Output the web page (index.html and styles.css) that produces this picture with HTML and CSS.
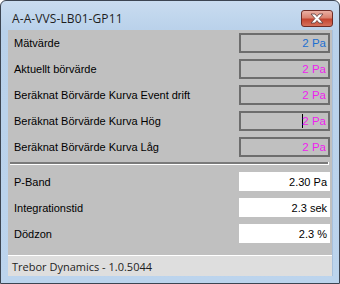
FILE: index.html
```html
<!DOCTYPE html>
<html lang="sv">
<head>
  <meta charset="UTF-8">
  <title>A-A-VVS-LB01-GP11</title>
  <link rel="stylesheet" href="styles.css">
</head>
<body>

  <div class="window">
    <div class="titlebar">
      <span class="title">A-A-VVS-LB01-GP11</span>
      <button class="close">
        <svg width="18" height="11" viewBox="0 0 18 11">
          <path d="M3 1 L7 1 L9 3.5 L11 1 L15 1 L11 5.5 L15 10 L11 10 L9 7.5 L7 10 L3 10 L7 5.5 Z"
                fill="#ffffff" stroke="#5a3a3a" stroke-width="0.8" stroke-linejoin="round"/>
        </svg>
      </button>
    </div>

    <div class="client">
      <div class="rows">
        <div class="row">
          <span class="label">Mätvärde</span>
          <span class="value blue">2 Pa</span>
        </div>
        <div class="row">
          <span class="label">Aktuellt börvärde</span>
          <span class="value pink">2 Pa</span>
        </div>
        <div class="row">
          <span class="label">Beräknat Börvärde Kurva Event drift</span>
          <span class="value pink">2 Pa</span>
        </div>
        <div class="row">
          <span class="label">Beräknat Börvärde Kurva Hög</span>
          <span class="value pink"><span class="caret"></span>2 Pa</span>
        </div>
        <div class="row">
          <span class="label">Beräknat Börvärde Kurva Låg</span>
          <span class="value pink">2 Pa</span>
        </div>
      </div>

      <div class="separator"></div>

      <div class="rows settings">
        <div class="row">
          <span class="label">P-Band</span>
          <span class="input">2.30 Pa</span>
        </div>
        <div class="row">
          <span class="label">Integrationstid</span>
          <span class="input">2.3 sek</span>
        </div>
        <div class="row">
          <span class="label">Dödzon</span>
          <span class="input">2.3 %</span>
        </div>
      </div>

      <div class="statusbar">Trebor Dynamics - 1.0.5044</div>
    </div>
  </div>

</body>
</html>
```

FILE: styles.css
```css
body {
  margin: 0;
  background-color: #ffffff;
}

.window {
  width: 340px;
  height: 284px;
  box-sizing: border-box;
  border: 1px solid #3c4552;
  border-radius: 6px 6px 0 0;
  background: linear-gradient(#c9dcf0, #b9d1ea 30px, #bcd4ed);
  padding: 0 6px 7px 7px;
  display: flex;
  flex-direction: column;
}

.titlebar {
  height: 29px;
  display: flex;
  align-items: flex-start;
  justify-content: space-between;
}

.title {
  font-family: 'Open Sans', sans-serif;
  font-size: 12px;
  color: #1e1e1e;
  margin: 9px 0 0 4px;
  letter-spacing: 0.1px;
}

.close {
  width: 32px;
  height: 17px;
  margin-top: 9px;
  padding: 0;
  border: 1px solid #6e2c26;
  border-radius: 3px;
  background: linear-gradient(#eab0a4, #d9826f 45%, #c4442f 55%, #d5715b);
  display: flex;
  align-items: center;
  justify-content: center;
}

.client {
  flex: 1;
  background-color: #c0c0c0;
  border-right: 1px solid #a7c0dc;
  display: flex;
  flex-direction: column;
  font-family: 'Liberation Sans', sans-serif;
  font-size: 11px;
  color: #000000;
}

.rows {
  display: flex;
  flex-direction: column;
  gap: 6px;
  padding: 3px 2px 0 5px;
}

.row {
  height: 20px;
  display: flex;
  align-items: center;
  justify-content: space-between;
}

.label {
  padding-left: 1px;
}

.value {
  width: 91px;
  height: 20px;
  box-sizing: border-box;
  border: 2px solid #6d6d6d;
  padding-right: 2px;
  display: flex;
  align-items: center;
  justify-content: flex-end;
  font-size: 11.5px;
}

.blue {
  color: #1d6fd0;
}

.pink {
  color: #ee22ee;
}

.caret {
  width: 1px;
  height: 14px;
  background-color: #000000;
  margin-right: -1px;
}

.separator {
  margin: 5px 3px 0 2px;
  height: 2px;
  background-color: #7a7a7a;
  border-bottom: 1px solid #ffffff;
  border-right: 1px solid #ffffff;
}

.settings {
  gap: 7px;
  padding-top: 7px;
}

.settings .row {
  height: 19px;
}

.input {
  width: 91px;
  height: 19px;
  box-sizing: border-box;
  background-color: #ffffff;
  padding-right: 3px;
  display: flex;
  align-items: center;
  justify-content: flex-end;
}

.statusbar {
  margin-top: auto;
  height: 21px;
  box-sizing: border-box;
  border-top: 1px solid #ffffff;
  background-color: #dedede;
  padding: 3px 0 0 4px;
  font-family: 'Open Sans', sans-serif;
  font-size: 11px;
  color: #1e1e1e;
}
```
